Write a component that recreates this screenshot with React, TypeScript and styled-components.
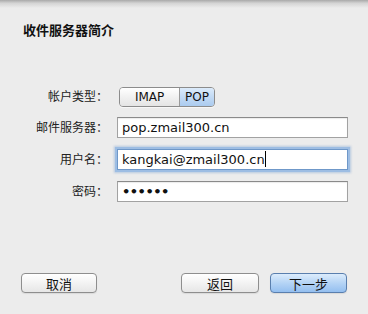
import React from "react";
import styled, { createGlobalStyle, css } from "styled-components";

const Global = createGlobalStyle`
  html, body { margin: 0; padding: 0; background: #ececec; }
  body { font-family: "DejaVu Sans", "Noto Sans CJK SC", sans-serif; }
`;

const Window = styled.div`
  width: 368px;
  height: 314px;
  background: #ececec;
  display: flex;
  flex-direction: column;
  overflow: hidden;
  color: #1b1b1b;
`;

const TopShade = styled.div`
  height: 8px;
  flex: none;
  background: linear-gradient(#a9a9a9, #d4d4d4 40%, #ececec);
`;

const Title = styled.h1`
  margin: 15px 0 0 23px;
  font-size: 13px;
  line-height: 15px;
  font-weight: bold;
  color: #111;
`;

const Form = styled.div`
  margin-top: 49px;
  display: grid;
  grid-template-columns: 108px 231px;
  column-gap: 9px;
  row-gap: 11px;
  align-items: center;
`;

const Label = styled.div`
  text-align: right;
  font-size: 12px;
  line-height: 16px;
  color: #222;
`;

const Segmented = styled.div`
  display: flex;
  width: 96px;
  height: 20px;
  margin-left: 2px;
  margin-bottom: -1px;
  box-sizing: border-box;
  border: 1px solid #8c8c8c;
  border-radius: 4px;
  overflow: hidden;
  box-shadow: 0 1px 0 rgba(255, 255, 255, 0.6);
`;

const Segment = styled.div<{ $w: number; $on?: boolean }>`
  width: ${(p) => p.$w}px;
  display: flex;
  align-items: center;
  justify-content: center;
  font-size: 12px;
  color: #111;
  background: linear-gradient(#ffffff, #f1f1f1 50%, #e4e4e4);
  & + & { border-left: 1px solid #9a9a9a; }
  ${(p) =>
    p.$on &&
    css`
      background: linear-gradient(#dcebfb, #c2daf4 50%, #abcbef);
    `}
`;

const Field = styled.div<{ $focus?: boolean }>`
  height: 21px;
  box-sizing: border-box;
  border: 1px solid #a2a2a2;
  border-top-color: #8a8a8a;
  background: #fff;
  padding: 0 4px;
  font-size: 13px;
  line-height: 19px;
  color: #111;
  white-space: nowrap;
  box-shadow: inset 0 1px 1px rgba(0, 0, 0, 0.08);
  ${(p) =>
    p.$focus &&
    css`
      border-color: #6f98c9;
      box-shadow: 0 0 0 2px #9dbde3, 0 0 2px 3px rgba(120, 160, 210, 0.45);
    `}
`;

const Caret = styled.span`
  display: inline-block;
  width: 1px;
  height: 16px;
  background: #000;
  vertical-align: -3px;
`;

const Dots = styled.span`
  font-size: 13px;
  font-weight: bold;
  letter-spacing: -0.5px;
`;

const Footer = styled.div`
  margin-top: auto;
  padding: 0 21px 21px 21px;
  display: flex;
  align-items: center;
`;

const Spacer = styled.div`
  flex: 1;
`;

const Button = styled.div<{ $w: number; $primary?: boolean }>`
  width: ${(p) => p.$w}px;
  height: 20px;
  box-sizing: border-box;
  border: 1px solid #8e8e8e;
  border-radius: 4px;
  display: flex;
  align-items: center;
  justify-content: center;
  font-size: 13px;
  color: #111;
  background: linear-gradient(#ffffff, #f3f3f3 50%, #e6e6e6);
  box-shadow: 0 1px 1px rgba(0, 0, 0, 0.08);
  & + & { margin-left: 11px; }
  ${(p) =>
    p.$primary &&
    css`
      border-color: #5a7fae;
      background: linear-gradient(#dcecfc, #b5d4f5 50%, #94bff0);
    `}
`;

export default function App() {
  return (
    <>
      <Global />
      <Window>
        <TopShade />
        <Title>收件服务器简介</Title>
        <Form>
          <Label>帐户类型：</Label>
          <Segmented>
            <Segment $w={61}>IMAP</Segment>
            <Segment $w={35} $on>
              POP
            </Segment>
          </Segmented>
          <Label>邮件服务器：</Label>
          <Field>pop.zmail300.cn</Field>
          <Label>用户名：</Label>
          <Field $focus>
            kangkai@zmail300.cn
            <Caret />
          </Field>
          <Label>密码：</Label>
          <Field>
            <Dots>••••••</Dots>
          </Field>
        </Form>
        <Footer>
          <Button $w={76}>取消</Button>
          <Spacer />
          <Button $w={78}>返回</Button>
          <Button $w={77} $primary>
            下一步
          </Button>
        </Footer>
      </Window>
    </>
  );
}
